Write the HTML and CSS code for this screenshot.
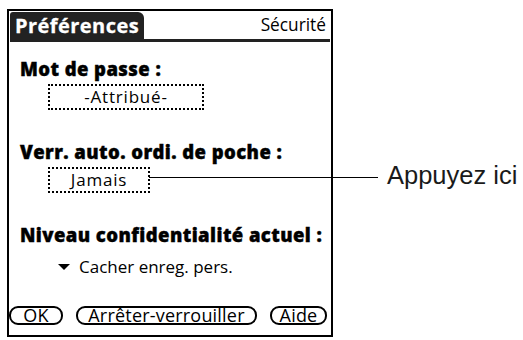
FILE: index.html
```html
<!DOCTYPE html>
<html lang="fr">
<head>
<meta charset="utf-8">
<title>Préférences - Sécurité</title>
<link rel="stylesheet" href="styles.css">
</head>
<body>
<div class="stage">
  <div class="device">
    <div class="titlebar">
      <span class="tab">Préférences</span>
      <span class="form-title">Sécurité</span>
    </div>
    <div class="form">
      <div class="label first">Mot de passe :</div>
      <div class="selector pw">-Attribué-</div>
      <div class="label">Verr. auto. ordi. de poche :</div>
      <div class="selector lock">Jamais</div>
      <div class="label">Niveau confidentialité actuel :</div>
      <div class="popup"><span class="tri"></span>Cacher enreg. pers.</div>
    </div>
    <div class="buttons">
      <span class="btn ok">OK</span>
      <span class="btn lockbtn">Arrêter-verrouiller</span>
      <span class="btn help">Aide</span>
    </div>
  </div>
  <div class="callout"><span class="leader"></span><span class="callout-text">Appuyez ici</span></div>
</div>
</body>
</html>
```
FILE: styles.css
```css
html, body {
  margin: 0;
  padding: 0;
  background: #fff;
}
body {
  width: 523px;
  height: 340px;
  overflow: hidden;
  font-family: "Open Sans", "DejaVu Sans", sans-serif;
  color: #000;
}
.stage {
  position: relative;
  box-sizing: border-box;
  width: 523px;
  height: 340px;
  padding: 9px 0 0 7px;
}
.device {
  width: 322px;
  height: 324px;
  border: 2px solid #000;
  display: flex;
  flex-direction: column;
  box-sizing: content-box;
}
.titlebar {
  display: flex;
  align-items: flex-end;
  margin: 1px 1px 0 1px;
  border-bottom: 3px solid #222;
  height: 27px;
}
.tab {
  background: #222;
  color: #fff;
  font-weight: 700;
  font-size: 20px;
  line-height: 27px;
  height: 27px;
  padding: 0 5px 0 5px;
  border-radius: 3px 6px 0 0;
  letter-spacing: 0.45px;
  -webkit-text-stroke: 0.3px #fff;
}
.form-title {
  margin-left: auto;
  margin-right: 4px;
  font-size: 17.3px;
  line-height: 22px;
  padding-bottom: 3px;
}
.form {
  padding-left: 11px;
}
.label {
  font-weight: 800;
  font-size: 18.5px;
  line-height: 20px;
  margin-top: 32px;
  letter-spacing: 0.42px;
  -webkit-text-stroke: 0.4px #000;
}
.label.first {
  margin-top: 17px;
}
.selector {
  box-sizing: border-box;
  height: 26px;
  border: 2px dotted #000;
  margin: 5px 0 0 28px;
  font-size: 17px;
  line-height: 21px;
  text-align: center;
  letter-spacing: 0.8px;
}
.selector.pw { width: 156px; }
.selector.lock { width: 102px; }
.popup {
  margin: 12px 0 0 38px;
  font-size: 17px;
  line-height: 20px;
  display: flex;
  align-items: center;
}
.tri {
  width: 0;
  height: 0;
  border-left: 6.5px solid transparent;
  border-right: 6.5px solid transparent;
  border-top: 6px solid #000;
  margin-right: 9px;
}
.buttons {
  margin-top: auto;
  margin-bottom: 10px;
  display: flex;
  gap: 13px;
}
.btn {
  box-sizing: border-box;
  height: 19px;
  border: 2px solid #000;
  border-radius: 9px;
  font-size: 18px;
  line-height: 14px;
  text-align: center;
  letter-spacing: 0.2px;
}
.btn.ok { width: 54px; }
.btn.lockbtn { width: 181px; }
.btn.help { width: 57px; }
.callout {
  position: absolute;
  left: 149px;
  top: 166px;
  display: flex;
  align-items: center;
  height: 22px;
}
.leader {
  width: 229px;
  height: 1px;
  background: #000;
}
.callout-text {
  margin-left: 9px;
  margin-bottom: 4px;
  font-family: "Liberation Sans", Arial, sans-serif;
  font-size: 25.5px;
  line-height: 22px;
  color: #1a1a1a;
}
```
